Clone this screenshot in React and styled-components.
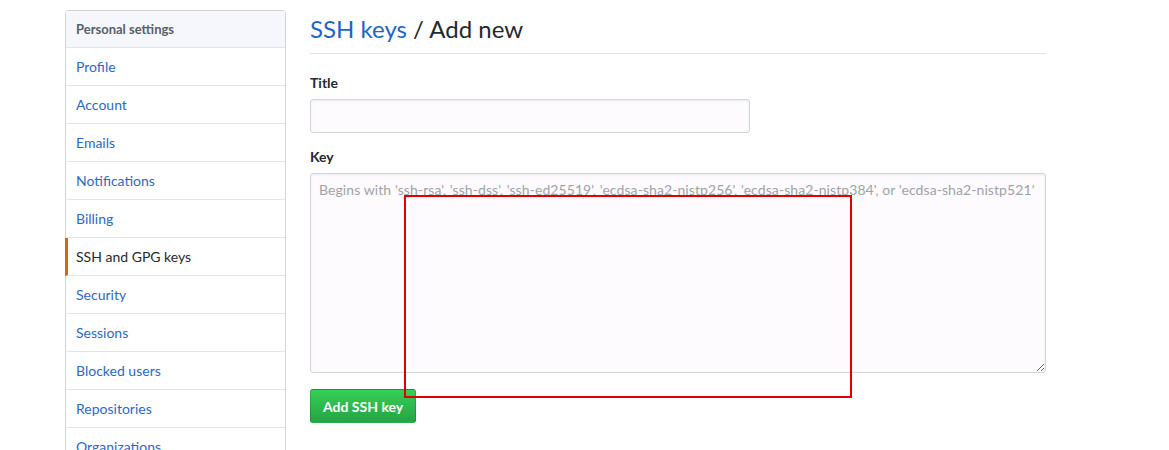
import React from 'react';
import styled, { createGlobalStyle } from 'styled-components';

const GlobalStyle = createGlobalStyle`
  body {
    margin: 0;
    background: #fff;
    font-family: Lato, "Noto Sans", sans-serif;
    color: #24292e;
  }
`;

const Page = styled.div`
  position: relative;
  width: 1169px;
  height: 450px;
  overflow: hidden;
  display: flex;
  align-items: flex-start;
  gap: 24px;
  padding: 10px 0 0 65px;
  box-sizing: border-box;
`;

const Menu = styled.nav`
  width: 219px;
  border: 1px solid #d1d5da;
  border-radius: 3px;
  flex-shrink: 0;
`;

const MenuHeading = styled.div`
  height: 36px;
  display: flex;
  align-items: center;
  padding: 0 10px;
  background: #f5f7fd;
  border-bottom: 1px solid #e1e4e8;
  font-size: 13px;
  font-weight: 700;
  color: #586069;
`;

const MenuItem = styled.a`
  display: flex;
  align-items: center;
  height: 37px;
  padding: 0 8px;
  border-bottom: 1px solid #e1e4e8;
  border-left: 3px solid ${p => (p.$active ? '#e36209' : 'transparent')};
  margin-left: -1px;
  font-size: 14px;
  color: ${p => (p.$active ? '#24292e' : '#2a69c7')};
  text-decoration: none;
  cursor: pointer;
`;

const Main = styled.main`
  width: 736px;
`;

const Heading = styled.h2`
  margin: 0 0 19px;
  padding: 3px 0 8px;
  font-size: 24px;
  font-weight: 400;
  line-height: 32px;
  border-bottom: 1px solid #e1e4e8;

  a {
    color: #1d65c5;
    text-decoration: none;
  }
`;

const Field = styled.div`
  margin-bottom: 14px;
`;

const Label = styled.label`
  display: block;
  font-size: 14px;
  font-weight: 700;
  line-height: 20px;
  margin-bottom: 6px;
`;

const Input = styled.input`
  display: block;
  width: 440px;
  height: 34px;
  box-sizing: border-box;
  border: 1px solid #d1d5da;
  border-radius: 3px;
  background: #fdfbfd;
  box-shadow: inset 0 1px 2px rgba(27, 31, 35, 0.075);
  font: inherit;
  font-size: 14px;
  padding: 6px 8px;
`;

const TextArea = styled.textarea`
  display: block;
  width: 736px;
  height: 200px;
  box-sizing: border-box;
  border: 1px solid #d1d5da;
  border-radius: 3px;
  background: #fdfbfd;
  box-shadow: inset 0 1px 2px rgba(27, 31, 35, 0.075);
  font-family: inherit;
  font-size: 14px;
  line-height: 20px;
  padding: 6px 8px;
  resize: vertical;

  &::placeholder {
    color: #9fa3a8;
    letter-spacing: 0.08px;
  }
`;

const Button = styled.button`
  height: 34px;
  padding: 0 12px;
  margin-top: 2px;
  border: 1px solid rgba(27, 31, 35, 0.2);
  border-radius: 3px;
  background: linear-gradient(-180deg, #34d058 0%, #28a745 90%);
  color: #fff;
  font-family: inherit;
  font-size: 14px;
  font-weight: 700;
  cursor: pointer;
`;

const Annotation = styled.div`
  position: absolute;
  left: 404px;
  top: 195px;
  width: 448px;
  height: 203px;
  box-sizing: border-box;
  border: 2px solid #e00000;
  pointer-events: none;
`;

const items = [
  'Profile',
  'Account',
  'Emails',
  'Notifications',
  'Billing',
  'SSH and GPG keys',
  'Security',
  'Sessions',
  'Blocked users',
  'Repositories',
  'Organizations',
];

export default function App() {
  return (
    <>
      <GlobalStyle />
      <Page>
        <Menu>
          <MenuHeading>Personal settings</MenuHeading>
          {items.map(item => (
            <MenuItem key={item} $active={item === 'SSH and GPG keys'}>
              {item}
            </MenuItem>
          ))}
        </Menu>
        <Main>
          <Heading>
            <a>SSH keys</a> / Add new
          </Heading>
          <Field>
            <Label>Title</Label>
            <Input type="text" />
          </Field>
          <Field>
            <Label>Key</Label>
            <TextArea placeholder="Begins with 'ssh-rsa', 'ssh-dss', 'ssh-ed25519', 'ecdsa-sha2-nistp256', 'ecdsa-sha2-nistp384', or 'ecdsa-sha2-nistp521'" />
          </Field>
          <Button>Add SSH key</Button>
        </Main>
        <Annotation />
      </Page>
    </>
  );
}
